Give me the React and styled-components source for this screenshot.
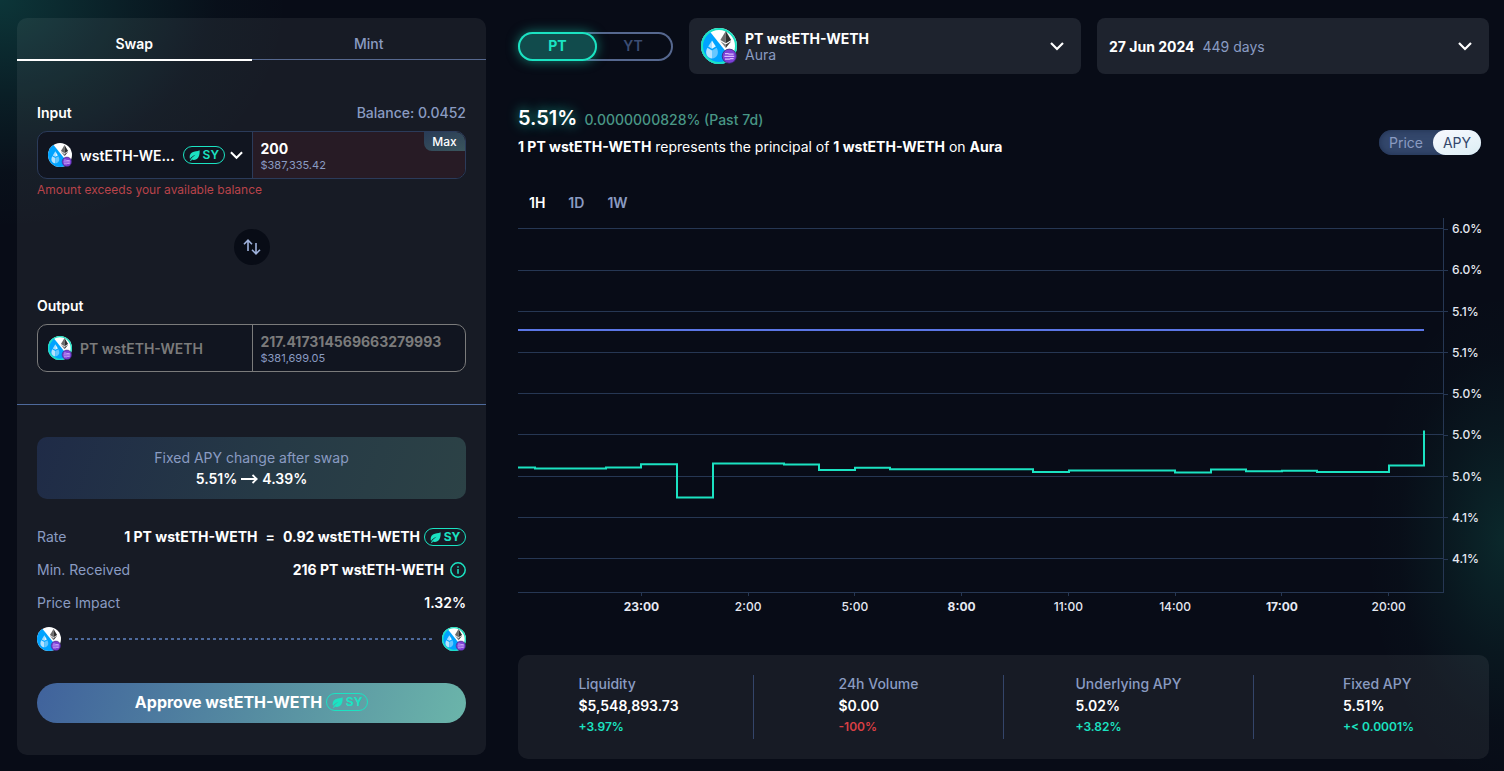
import React, { useId, useState } from "react";
import styled, { createGlobalStyle } from "styled-components";

const GlobalStyle = createGlobalStyle`
  * {
    box-sizing: border-box;
  }

  body {
    margin: 0;
    background: #080c17;
    color: #ffffff;
    font-family: Inter, "Liberation Sans", sans-serif;
    font-size: 14px;
    line-height: 20px;
  }

  button,
  input {
    margin: 0;
    padding: 0;
    border: none;
    background: none;
    color: inherit;
    font: inherit;
  }

  button {
    cursor: pointer;
  }
`;

const Page = styled.div`
  display: grid;
  grid-template-columns: minmax(0, 469fr) minmax(0, 971fr);
  align-items: start;
  gap: 32px;
  min-height: 100vh;
  padding: 18px 15px 12px 17px;
  background:
    radial-gradient(
      ellipse 290px 230px at 0 0,
      rgba(27, 200, 175, 0.22),
      rgba(27, 200, 175, 0.09) 45%,
      rgba(27, 200, 175, 0.02) 75%,
      transparent
    ),
    radial-gradient(
      ellipse 140px 250px at 100% 540px,
      rgba(27, 200, 160, 0.15),
      rgba(27, 200, 160, 0.06) 45%,
      rgba(27, 200, 160, 0.01) 75%,
      transparent
    ),
    #080c17;
`;

/* ---------- shared bits ---------- */

const Badge = styled.span`
  display: inline-flex;
  flex-shrink: 0;
  align-items: center;
  justify-content: center;
  gap: 3px;
  width: 42px;
  height: 18px;
  border: 1px solid #1be3c2;
  border-radius: 9px;
  color: #1be3c2;
  font-size: 12px;
  font-weight: ${props => (props.$bold ? 700 : 600)};
  line-height: 16px;
`;

const SyBadge = ({ bold }) => (
  <Badge $bold={bold}>
    <svg width="11" height="11" viewBox="0 0 11 11" aria-hidden="true">
      <path
        d="M10.6 0.3C8.5 1.6 5.4 1 3 2.6C0.6 4.2 0.3 6.8 1 8.9C2.4 7.2 4 5.7 6.6 4.8C4.4 6.3 2.3 8.1 1 10.7L2 10.9L2.9 9.6C5.4 10.4 8 9.6 9.3 7.5C10.7 5.2 10.8 2.6 10.6 0.3Z"
        fill="currentColor"
      />
    </svg>
    SY
  </Badge>
);

const Icon = styled.svg`
  flex-shrink: 0;
`;

const TokenIcon = ({ size = 24, ring }) => {
  const id = useId();
  return (
    <Icon width={size} height={size} viewBox="0 0 36 36" aria-hidden="true">
      <clipPath id={id}>
        <circle cx="18" cy="18" r="18" />
      </clipPath>
      <g clipPath={`url(#${id})`}>
        <rect width="36" height="36" fill="#ffffff" />
        <path d="M0 0H6L30 30V36H0Z" fill="#00a3ff" />
      </g>
      {ring && <circle cx="18" cy="18" r="17" fill="none" stroke="#1be3c2" strokeWidth="2" />}
      <path d="M24.8 3L19.4 12L24.8 15.2Z" fill="#6c6c6c" />
      <path d="M24.8 3L30.2 12L24.8 15.2Z" fill="#2f3030" />
      <path d="M19.4 13.2L24.8 20V16.4Z" fill="#858585" />
      <path d="M30.2 13.2L24.8 20V16.4Z" fill="#3c3c3b" />
      <path d="M11 12.5L7.2 18.6L11 20.8Z" fill="#a5dcff" />
      <path d="M11 12.5L14.8 18.6L11 20.8Z" fill="#e3f5ff" />
      <path d="M6.4 19.8L11 22.5V30.5C6.4 30.5 3.2 25.4 6.4 19.8Z" fill="#b4e2ff" />
      <path d="M15.6 19.8L11 22.5V30.5C15.6 30.5 18.8 25.4 15.6 19.8Z" fill="#66c7ff" />
      <circle cx="28.3" cy="28.2" r="7.1" fill="#7c3fd6" stroke="#3a2a72" strokeWidth="0.8" />
      <path
        d="M24 25.6H27L28.2 26.2H32.6M23.4 28.4H33.2M24 31.2H28.4L29.6 30.6H32.6"
        fill="none"
        stroke="#d9bcff"
        strokeWidth="1.2"
      />
    </Icon>
  );
};

const Chevron = ({ size = 14 }) => (
  <Icon width={size} height="9" viewBox="0 0 14 9" aria-hidden="true">
    <path d="M1 1L7 7L13 1" fill="none" stroke="currentColor" strokeWidth="2.2" />
  </Icon>
);

/* ---------- swap panel ---------- */

const Panel = styled.section`
  border-radius: 10px;
  background: rgba(255, 255, 255, 0.062);
`;

const Tabs = styled.div`
  display: grid;
  grid-template-columns: 1fr 1fr;
  height: 43px;
`;

const Tab = styled.button`
  height: ${props => (props.$active ? "43px" : "42px")};
  padding-top: 10px;
  border-bottom: ${props => (props.$active ? "2px solid #ffffff" : "1px solid #56688f")};
  color: ${props => (props.$active ? "#ffffff" : "#8a9bc2")};
  font-weight: ${props => (props.$active ? 600 : 500)};
`;

const SwapForm = styled.div`
  display: flex;
  flex-direction: column;
  padding: 42px 20px 32px;
  border-bottom: 1px solid #4e6a9c;
`;

const FieldHead = styled.div`
  display: flex;
  justify-content: space-between;
  margin-bottom: 8px;
  font-weight: 600;
`;

const Balance = styled.span`
  color: #8a9bc2;
  font-weight: 500;
`;

const Field = styled.div`
  position: relative;
  display: grid;
  grid-template-columns: minmax(0, 1fr) minmax(0, 1fr);
  height: 48px;
  overflow: hidden;
  border: 1px solid ${props => (props.$readOnly ? "#7b7b7b" : "#2b3b5a")};
  border-radius: 10px;
  background: #111520;
`;

const TokenButton = styled.button`
  display: flex;
  align-items: center;
  gap: 8px;
  padding: 0 10px;
  color: ${props => (props.disabled ? "#7b7b7b" : "#ffffff")};
  font-weight: 600;
  white-space: nowrap;
`;

const TokenName = styled.span`
  flex: 1;
  padding-top: 2px;
  text-align: left;
`;

const TokenTail = styled.span`
  display: flex;
  align-items: center;
  gap: 5px;
`;

const Amount = styled.div`
  display: flex;
  flex-direction: column;
  justify-content: center;
  padding: 2px 8px 0;
  border-left: 1px solid ${props => (props.$readOnly ? "#7b7b7b" : "#2b3b5a")};
  background: ${props => (props.$error ? "#271b25" : "transparent")};
`;

const AmountInput = styled.input`
  width: 100%;
  height: 18px;
  outline: none;
  font-weight: 700;
  color: ${props => (props.readOnly ? "#7b7b7b" : "#ffffff")};
`;

const Fiat = styled.span`
  color: #8a9bc2;
  font-size: 11px;
  line-height: 14px;
`;

const MaxButton = styled.button`
  position: absolute;
  top: 0;
  right: 0;
  width: 41px;
  height: 19px;
  border-radius: 0 8px 0 8px;
  background: linear-gradient(160deg, #293b57, #3a555c);
  font-size: 12px;
  font-weight: 500;
  line-height: 18px;
`;

const FieldError = styled.p`
  margin: 3px 0 0;
  color: #b9434a;
  font-size: 12px;
  line-height: 16px;
`;

const FlipButton = styled.button`
  display: flex;
  align-items: center;
  justify-content: center;
  align-self: center;
  width: 36px;
  height: 36px;
  margin: 31px 0;
  border-radius: 50%;
  background: #080c16;
  color: #9fb2dc;
`;

const SwapSummary = styled.div`
  padding: 32px 20px;
`;

const ApyChange = styled.div`
  display: flex;
  flex-direction: column;
  align-items: center;
  gap: 1px;
  padding: 11px 0 10px;
  border-radius: 10px;
  background: linear-gradient(110deg, #1f2b47, #263a46 55%, #2c4246);
  color: #8a9bc2;
`;

const ApyValues = styled.strong`
  display: flex;
  align-items: center;
  gap: 4px;
  color: #ffffff;
  font-weight: 600;
`;

const Rows = styled.dl`
  display: flex;
  flex-direction: column;
  gap: 13px;
  margin: 28px 0 14px;
`;

const Row = styled.div`
  display: flex;
  align-items: center;
  justify-content: space-between;
`;

const RowLabel = styled.dt`
  color: #8a9bc2;
`;

const RowValue = styled.dd`
  display: flex;
  align-items: center;
  gap: ${props => props.$gap || 0}px;
  margin: 0;
  color: #ffffff;
  font-weight: 600;
`;

const ValueWithBadge = styled.span`
  display: flex;
  align-items: center;
  gap: 4px;
`;

const Route = styled.div`
  display: flex;
  align-items: center;
  gap: 8px;
`;

const RouteLine = styled.div`
  flex: 1;
  height: 2px;
  background: repeating-linear-gradient(90deg, #4e6a9c 0 3px, transparent 3px 6px);
`;

const ApproveButton = styled.button`
  display: flex;
  align-items: center;
  justify-content: center;
  gap: 4px;
  width: 100%;
  height: 40px;
  margin-top: 32px;
  padding-bottom: 2px;
  border-radius: 20px;
  background: linear-gradient(110deg, #40629c, #558ba1 50%, #6bb5aa);
  font-size: 16px;
  font-weight: 700;
`;

/* ---------- market side ---------- */

const Market = styled.main`
  display: flex;
  flex-direction: column;
`;

const Toolbar = styled.div`
  display: grid;
  grid-template-columns: 155px minmax(0, 1fr) minmax(0, 1fr);
  align-items: center;
  gap: 16px;
`;

const Switch = styled.div`
  display: flex;
  height: 29px;
  border-radius: 15px;
  box-shadow: inset 0 0 0 2px #56688f;
`;

const SwitchOption = styled.button`
  flex: ${props => (props.$active ? "0 0 79px" : "1")};
  border-radius: 15px;
  padding-right: ${props => (props.$active ? 0 : 4)}px;
  background: ${props => (props.$active ? "#114b4c" : "transparent")};
  box-shadow: ${props => (props.$active ? "inset 0 0 0 2px #1be3c2, 0 0 12px rgba(27, 227, 194, 0.5)" : "none")};
  color: ${props => (props.$active ? "#1be3c2" : "#3c4d73")};
  font-weight: ${props => (props.$active ? 700 : 600)};
`;

const Picker = styled.button`
  display: flex;
  align-items: center;
  gap: 8px;
  height: 56px;
  padding: 0 17px 0 12px;
  border-radius: 8px;
  background: #1e232e;
  text-align: left;

  & > svg:last-child {
    margin-left: auto;
  }
`;

const PickerText = styled.span`
  display: flex;
  flex-direction: ${props => (props.$inline ? "row" : "column")};
  column-gap: 8px;
  padding-top: 2px;
  line-height: 16px;
`;

const Strong = styled.strong`
  font-weight: 700;
`;

const Muted = styled.span`
  color: #8a9bc2;
`;

const Headline = styled.div`
  display: flex;
  align-items: flex-end;
  justify-content: space-between;
  margin-top: 32px;
  padding-right: 8px;
`;

const Yield = styled.div`
  display: flex;
  align-items: baseline;
  gap: 7px;
  color: #489786;
  font-weight: 500;
  line-height: 24px;
`;

const YieldValue = styled.strong`
  color: #ffffff;
  font-size: 20px;
  font-weight: 600;
  text-shadow: 0 0 12px rgba(27, 227, 194, 0.8);
`;

const Description = styled.p`
  margin: 5px 0 0;

  strong {
    font-weight: 700;
  }
`;

const UnitToggle = styled.div`
  display: flex;
  height: 25px;
  margin-bottom: 2px;
  border-radius: 13px;
  background: #33476b;
  box-shadow: inset 0 0 6px #1f2f50;
`;

const UnitOption = styled.button`
  width: ${props => (props.$active ? 48 : 54)}px;
  border-radius: 13px;
  background: ${props => (props.$active ? "linear-gradient(160deg, #f8f9ff, #dceef4)" : "none")};
  color: ${props => (props.$active ? "#33476b" : "#8a9bc2")};
`;

const Ranges = styled.div`
  display: flex;
  gap: 23px;
  margin: 36px 0 5px;
  padding-left: 11px;
`;

const Range = styled.button`
  color: ${props => (props.$active ? "#ffffff" : "#8a9bc2")};
  font-weight: 600;
`;

const Chart = styled.div`
  display: grid;
  grid-template-columns: minmax(0, 1fr) 45px;
  color: #e6e9f2;
  font-size: 12px;
  line-height: 16px;
`;

const Plot = styled.svg`
  display: block;
  width: 100%;
  height: 375px;
  border-right: 1px solid #263753;
  border-bottom: 1px solid #263753;
`;

const YAxis = styled.div`
  display: flex;
  flex-direction: column;
  justify-content: space-between;
  padding: 3px 0 26px;
  font-weight: 500;
`;

const YLabel = styled.span`
  display: flex;
  align-items: center;
  gap: 4px;

  &::before {
    content: "";
    width: 4px;
    height: 1px;
    background: #263753;
  }
`;

const XAxis = styled.div`
  display: grid;
  grid-template-columns: repeat(8, 1fr);
  padding: 0 2px 0 70px;
`;

const XLabel = styled.span`
  display: flex;
  flex-direction: column;
  align-items: center;
  gap: 3px;
  font-weight: ${props => (props.$bold ? 700 : 500)};

  &::before {
    content: "";
    width: 1px;
    height: 3px;
    background: #263753;
  }
`;

const Stats = styled.section`
  display: flex;
  align-items: center;
  height: 104px;
  margin-top: 40px;
  border-radius: 10px;
  background: rgba(255, 255, 255, 0.062);
`;

const Divider = styled.div`
  width: 1px;
  height: 64px;
  margin: 0 14px;
  background: #34456a;
`;

const Stat = styled.div`
  display: flex;
  flex: 1;
  justify-content: center;
`;

const StatBody = styled.div`
  display: flex;
  flex-direction: column;
  gap: 1px;
  padding-bottom: 3px;
`;

const StatLabel = styled.span`
  margin-bottom: 1px;
  color: #8a9bc2;
  font-weight: 500;
`;

const StatValue = styled.strong`
  font-weight: 600;
`;

const StatChange = styled.span`
  color: ${props => (props.$down ? "#d93f44" : "#1be3c2")};
  font-size: 12px;
  font-weight: 600;
`;

const GRID_LINES = [10, 52, 93, 134, 175, 216, 258, 299, 340];
const Y_LABELS = ["6.0%", "6.0%", "5.1%", "5.1%", "5.0%", "5.0%", "5.0%", "4.1%", "4.1%"];
const X_LABELS = ["23:00", "2:00", "5:00", "8:00", "11:00", "14:00", "17:00", "20:00"];

// [x where the step starts, y of the step]
const APY_STEPS = [
  [0, 249.5], [17, 250.4], [88, 249.6], [123, 246.3], [159, 279.5], [195, 245.4],
  [266, 246.4], [301, 252], [337, 249.8], [372, 251.2], [515, 254], [551, 252.6],
  [657, 254.4], [693, 251.4], [728, 253.2], [764, 252.7], [799, 254], [871, 247.6],
  [906, 212.5],
];

const apyPath = APY_STEPS.map(([x, y], i) => (i === 0 ? `M${x} ${y}` : `H${x}V${y}`)).join("");

const STATS = [
  { label: "Liquidity", value: "$5,548,893.73", change: "+3.97%" },
  { label: "24h Volume", value: "$0.00", change: "-100%", down: true },
  { label: "Underlying APY", value: "5.02%", change: "+3.82%" },
  { label: "Fixed APY", value: "5.51%", change: "+< 0.0001%" },
];

const shorten = (name, max) => (name.length > max ? `${name.slice(0, max)}...` : name);

const SwapPanel = () => {
  const [tab, setTab] = useState("Swap");
  const [amount, setAmount] = useState("200");

  return (
    <Panel>
      <Tabs role="tablist">
        {["Swap", "Mint"].map((name) => (
          <Tab
            key={name}
            role="tab"
            aria-selected={tab === name}
            $active={tab === name}
            onClick={() => setTab(name)}
          >
            {name}
          </Tab>
        ))}
      </Tabs>

      <SwapForm>
        <FieldHead>
          <label htmlFor="input-amount">Input</label>
          <Balance>Balance: 0.0452</Balance>
        </FieldHead>
        <Field>
          <TokenButton type="button">
            <TokenIcon />
            <TokenName>{shorten("wstETH-WETH", 9)}</TokenName>
            <TokenTail>
              <SyBadge />
              <Chevron size={13} />
            </TokenTail>
          </TokenButton>
          <Amount $error>
            <AmountInput
              id="input-amount"
              value={amount}
              onChange={(e) => setAmount(e.target.value)}
            />
            <Fiat>$387,335.42</Fiat>
          </Amount>
          <MaxButton type="button" onClick={() => setAmount("0.0452")}>Max</MaxButton>
        </Field>
        <FieldError>Amount exceeds your available balance</FieldError>

        <FlipButton type="button" aria-label="Switch input and output">
          <svg width="18" height="16" viewBox="0 0 18 16" fill="none" stroke="currentColor" strokeWidth="1.6">
            <path d="M5 12V1.5M1 5.2L5 1.2L9 5.2" />
            <path d="M13 4V14.5M9 10.8L13 14.8L17 10.8" />
          </svg>
        </FlipButton>

        <FieldHead>
          <label htmlFor="output-amount">Output</label>
        </FieldHead>
        <Field $readOnly>
          <TokenButton type="button" disabled>
            <TokenIcon ring />
            <TokenName>PT wstETH-WETH</TokenName>
          </TokenButton>
          <Amount $readOnly>
            <AmountInput id="output-amount" readOnly value="217.417314569663279993" />
            <Fiat>$381,699.05</Fiat>
          </Amount>
        </Field>
      </SwapForm>

      <SwapSummary>
        <ApyChange>
          Fixed APY change after swap
          <ApyValues>
            5.51%
            <svg width="17" height="10" viewBox="0 0 17 10" fill="none" stroke="currentColor" strokeWidth="1.8">
              <path d="M0 5H15.5M11.5 1L15.7 5L11.5 9" />
            </svg>
            4.39%
          </ApyValues>
        </ApyChange>

        <Rows>
          <Row>
            <RowLabel>Rate</RowLabel>
            <RowValue $gap={8}>
              <Strong>1 PT wstETH-WETH</Strong>
              <span>=</span>
              <ValueWithBadge>
                <Strong>0.92 wstETH-WETH</Strong>
                <SyBadge bold />
              </ValueWithBadge>
            </RowValue>
          </Row>
          <Row>
            <RowLabel>Min. Received</RowLabel>
            <RowValue $gap={6}>
              <Strong>216 PT wstETH-WETH</Strong>
              <svg width="16" height="16" viewBox="0 0 16 16" fill="none" stroke="#1be3c2" strokeWidth="1.5">
                <circle cx="8" cy="8" r="7.2" />
                <path d="M8 7V11.8M8 4.2V5.8" />
              </svg>
            </RowValue>
          </Row>
          <Row>
            <RowLabel>Price Impact</RowLabel>
            <RowValue>1.32%</RowValue>
          </Row>
        </Rows>

        <Route>
          <TokenIcon />
          <RouteLine />
          <TokenIcon ring />
        </Route>

        <ApproveButton type="button">
          Approve wstETH-WETH
          <SyBadge bold />
        </ApproveButton>
      </SwapSummary>
    </Panel>
  );
};

const ApyChart = () => (
  <Chart>
    <Plot viewBox="0 0 925 374" preserveAspectRatio="none" role="img" aria-label="APY history">
      {GRID_LINES.map((y) => (
        <rect key={y} x="0" y={y} width="925" height="1" fill="#263753" />
      ))}
      <path d="M0 112H906" fill="none" stroke="#5b76e6" strokeWidth="2" vectorEffect="non-scaling-stroke" />
      <path d={apyPath} fill="none" stroke="#1be3c2" strokeWidth="2" vectorEffect="non-scaling-stroke" />
    </Plot>
    <YAxis>
      {Y_LABELS.map((label, i) => (
        <YLabel key={i}>{label}</YLabel>
      ))}
    </YAxis>
    <XAxis>
      {X_LABELS.map((label, i) => (
        <XLabel key={label} $bold={i % 3 === 0}>{label}</XLabel>
      ))}
    </XAxis>
  </Chart>
);

const App = () => {
  const [side, setSide] = useState("PT");
  const [unit, setUnit] = useState("APY");
  const [range, setRange] = useState("1H");

  return (
    <>
      <GlobalStyle />
      <Page>
        <SwapPanel />

        <Market>
          <Toolbar>
            <Switch>
              {["PT", "YT"].map((name) => (
                <SwitchOption key={name} $active={side === name} onClick={() => setSide(name)}>
                  {name}
                </SwitchOption>
              ))}
            </Switch>
            <Picker>
              <TokenIcon size={36} ring />
              <PickerText>
                <Strong>PT wstETH-WETH</Strong>
                <Muted>Aura</Muted>
              </PickerText>
              <Chevron />
            </Picker>
            <Picker>
              <PickerText $inline>
                <Strong>27 Jun 2024</Strong>
                <Muted>449 days</Muted>
              </PickerText>
              <Chevron />
            </Picker>
          </Toolbar>

          <Headline>
            <div>
              <Yield>
                <YieldValue>5.51%</YieldValue>
                0.0000000828% (Past 7d)
              </Yield>
              <Description>
                <strong>1 PT wstETH-WETH</strong> represents the principal of{" "}
                <strong>1 wstETH-WETH</strong> on <strong>Aura</strong>
              </Description>
            </div>
            <UnitToggle>
              {["Price", "APY"].map((name) => (
                <UnitOption key={name} $active={unit === name} onClick={() => setUnit(name)}>
                  {name}
                </UnitOption>
              ))}
            </UnitToggle>
          </Headline>

          <Ranges>
            {["1H", "1D", "1W"].map((name) => (
              <Range key={name} $active={range === name} onClick={() => setRange(name)}>
                {name}
              </Range>
            ))}
          </Ranges>

          <ApyChart />

          <Stats>
            {STATS.map((stat, i) => (
              <React.Fragment key={stat.label}>
                {i > 0 && <Divider />}
                <Stat>
                  <StatBody>
                    <StatLabel>{stat.label}</StatLabel>
                    <StatValue>{stat.value}</StatValue>
                    <StatChange $down={stat.down}>{stat.change}</StatChange>
                  </StatBody>
                </Stat>
              </React.Fragment>
            ))}
          </Stats>
        </Market>
      </Page>
    </>
  );
};

export default App;
